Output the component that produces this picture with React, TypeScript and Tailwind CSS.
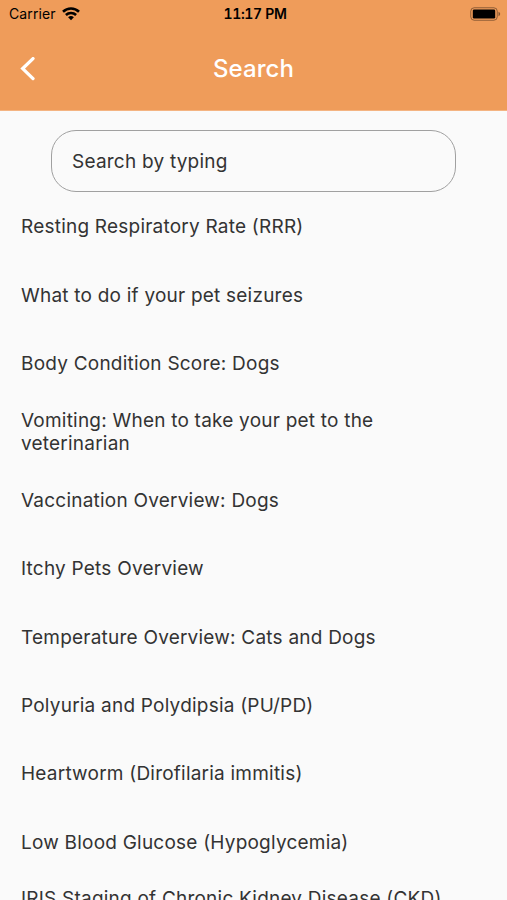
const articles = [
  'Resting Respiratory Rate (RRR)',
  'What to do if your pet seizures',
  'Body Condition Score: Dogs',
  'Vomiting: When to take your pet to the veterinarian',
  'Vaccination Overview: Dogs',
  'Itchy Pets Overview',
  'Temperature Overview: Cats and Dogs',
  'Polyuria and Polydipsia (PU/PD)',
  'Heartworm (Dirofilaria immitis)',
  'Low Blood Glucose (Hypoglycemia)',
  'IRIS Staging of Chronic Kidney Disease (CKD)',
];

function WifiIcon() {
  return (
    <svg viewBox="0 0 18 14" className="h-[14px] w-[18px]" fill="none" stroke="black" strokeWidth="2.6" aria-hidden="true">
      <path d="M1 4.7a11.5 11.5 0 0 1 16 0" />
      <path d="M3.9 8a7.4 7.4 0 0 1 10.2 0" />
      <path d="M6.1 10.3a4.2 4.2 0 0 1 5.8 0L9 13.3z" fill="black" stroke="none" />
    </svg>
  );
}

function BatteryIcon() {
  return (
    <svg viewBox="0 0 31 14" className="h-[14px] w-[31px]" aria-hidden="true">
      <rect x="0.75" y="0.75" width="26.5" height="12.5" rx="3.5" fill="none" stroke="black" strokeOpacity="0.4" />
      <rect x="2.8" y="2.4" width="22.4" height="9.2" rx="1.3" fill="black" />
      <path d="M28.5 4.8c2.2.8 2.2 3.6 0 4.4z" fill="black" fillOpacity="0.45" />
    </svg>
  );
}

export default function App() {
  return (
    <div className="flex h-[900px] w-full flex-col overflow-hidden bg-[#fafafa] font-['Inter',sans-serif] text-[#333]">
      <header className="h-[111px] shrink-0 border-b border-[#f4b482] bg-[#ef9c5a]">
        <div className="grid h-[27px] grid-cols-3 items-center pl-[9px] pr-[6px] text-black">
          <div className="flex items-center gap-[6px] text-[14px] tracking-[0.1px]">
            Carrier
            <WifiIcon />
          </div>
          <span className="text-center text-[14px] font-semibold tracking-[-0.35px] tabular-nums">11:17 PM</span>
          <div className="flex justify-end">
            <BatteryIcon />
          </div>
        </div>
        <div className="grid h-[83px] grid-cols-[60px_1fr_60px] items-center text-white">
          <button type="button" aria-label="Back" className="pl-[20px]">
            <svg viewBox="0 0 16 24" className="h-[24px] w-[16px]" fill="none" stroke="currentColor" strokeWidth="3.3" strokeLinecap="round" aria-hidden="true">
              <path d="M13 1.6L2.7 11.6l10.3 10" />
            </svg>
          </button>
          <h1 className="text-center text-[24px] font-medium tracking-[0.1px]">Search</h1>
        </div>
      </header>

      <main className="flex min-h-0 flex-1 flex-col pt-[19px] tracking-[0.22px]">
        <input
          type="text"
          aria-label="Search by typing"
          placeholder="Search by typing"
          className="mx-[51px] h-[62px] shrink-0 rounded-[25px] border-[1.4px] border-[#a0a0a0] bg-transparent px-[20px] text-[19px] outline-none placeholder:text-[#333] placeholder:opacity-100"
        />
        <ul className="pt-[0.5px]">
          {articles.map((title) => (
            <li key={title} className="flex h-[68.4px] items-center pl-[21px] pr-[50px] text-[19px] leading-[23px] last:h-[45px]">
              {title}
            </li>
          ))}
        </ul>
      </main>
    </div>
  );
}
